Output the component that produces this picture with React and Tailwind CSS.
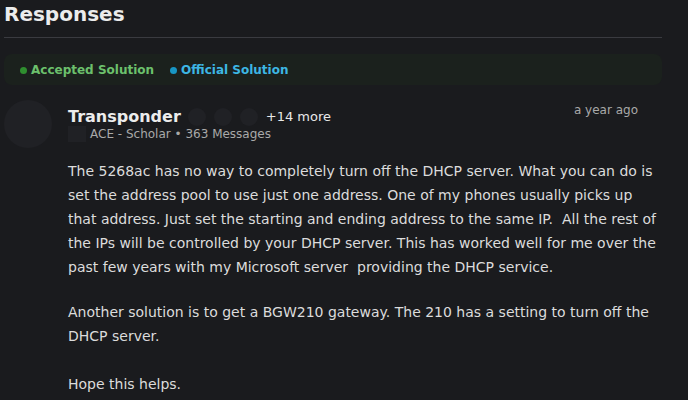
import React from 'react';

const font = { fontFamily: '"DejaVu Sans", sans-serif' };

const App = () => {
  return (
    <div className="w-[688px] h-[400px] overflow-hidden bg-[#1a1b1e] text-[#e3e3e3]" style={font}>
      <div className="pl-1 pr-[26px]">
        {/* HEADER */}
        <h1 className="text-[20px] font-bold leading-[28px] text-[#ececec]">Responses</h1>
        <div className="mt-[9px] h-px bg-[#3a3b40]"></div>

        {/* FILTER BAR */}
        <div className="mt-[16px] h-[31px] rounded-lg bg-[#1b211d] flex items-center gap-4 px-4 pt-[1px] text-[12px] font-bold">
          <span className="flex items-center gap-1 text-[#6cc06c]">
            <span className="w-[7px] h-[7px] rounded-full bg-[#2f8f2f]"></span>
            Accepted Solution
          </span>
          <span className="flex items-center gap-1 text-[#3db6e4]">
            <span className="w-[7px] h-[7px] rounded-full bg-[#1896c4]"></span>
            Official Solution
          </span>
        </div>

        {/* POST */}
        <div className="mt-[15px] flex gap-4">
          <div className="w-[48px] h-[48px] rounded-full bg-[#202125] shrink-0"></div>
          <div className="flex-1">
            <div className="flex justify-between">
              <div className="pt-[6px]">
                <div className="flex items-center h-[22px]">
                  <span className="text-[16px] font-bold text-[#ececec]">Transponder</span>
                  <span className="flex gap-[8px] ml-[7px]">
                    <span className="w-[18px] h-[18px] rounded-full bg-[#202125]"></span>
                    <span className="w-[18px] h-[18px] rounded-full bg-[#202125]"></span>
                    <span className="w-[18px] h-[18px] rounded-full bg-[#202125]"></span>
                  </span>
                  <span className="text-[13px] text-[#e8e8e8] ml-[8px]">+14 more</span>
                </div>
                <div className="-mt-[3px] flex items-center gap-1 h-[18px] text-[12px] text-[#a9a9a9]">
                  <span className="w-[18px] h-[16px] bg-[#202125]"></span>
                  <span>ACE - Scholar • 363 Messages</span>
                </div>
              </div>
              <span className="text-[12px] text-[#a9a9a9] pt-[1px] pr-[24px]">a year ago</span>
            </div>

            <div className="mt-[16px] text-[14px] leading-[24px] text-[#dcdcdc]">
              <p>
                The 5268ac has no way to completely turn off the DHCP server. What you can do is set the address pool to use just one address. One of my phones usually picks up that address. Just set the starting and ending address to the same IP.&nbsp; All the rest of the IPs will be controlled by your DHCP server. This has worked well for me over the past few years with my Microsoft server&nbsp; providing the DHCP service.
              </p>
              <p className="mt-[21px]">
                Another solution is to get a BGW210 gateway. The 210 has a setting to turn off the DHCP server.
              </p>
              <p className="mt-6">Hope this helps.</p>
            </div>
          </div>
        </div>
      </div>
    </div>
  );
};

export default App;
